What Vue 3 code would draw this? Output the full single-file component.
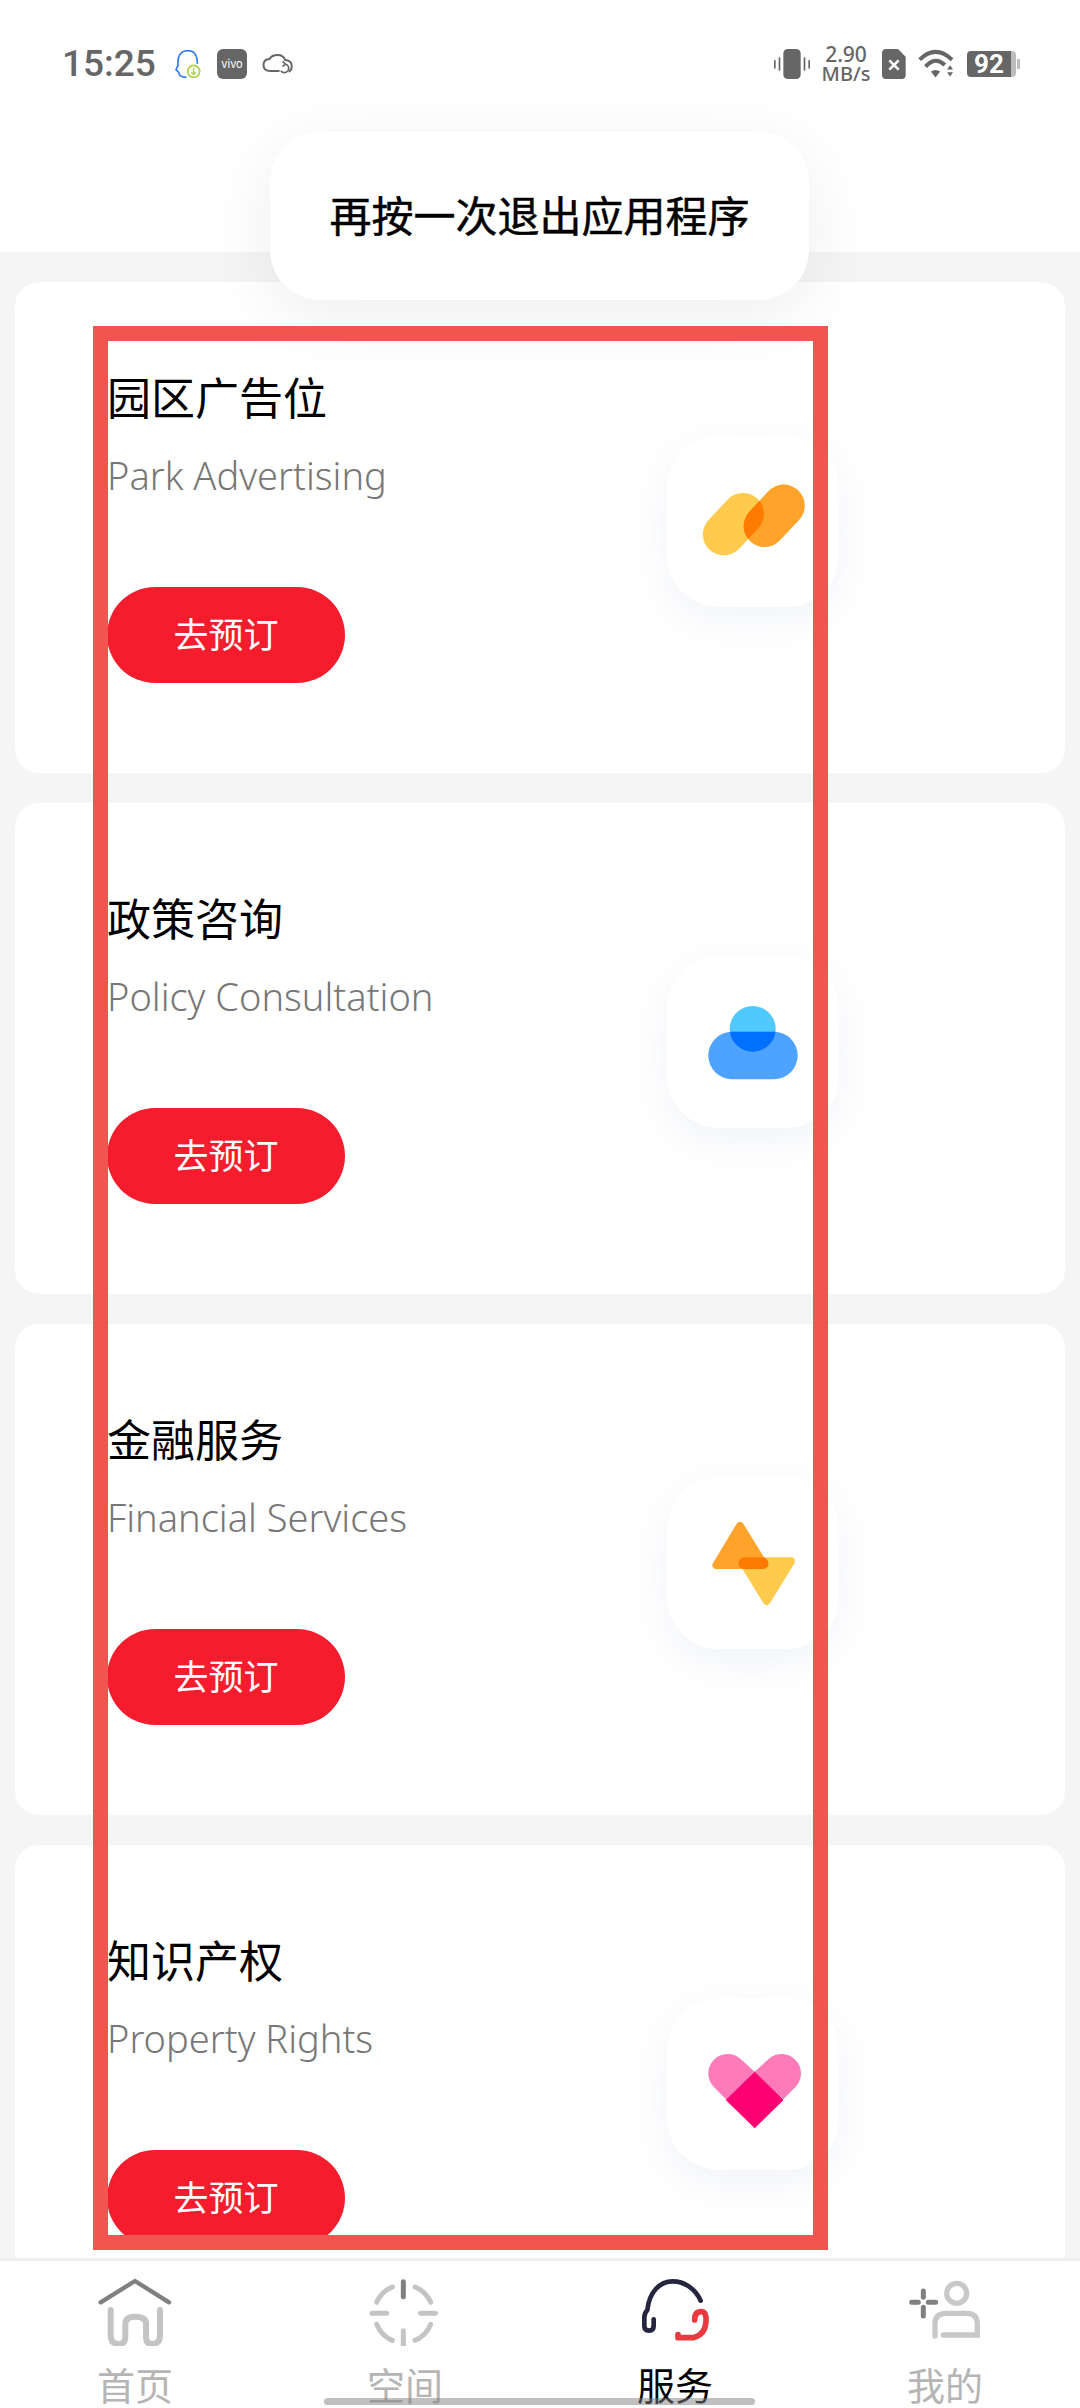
<template>
  <div class="page">
    <header class="status-area">
      <div class="status-left">
        <span class="time">15:25</span>
        <svg class="st-qq" viewBox="403 88 78 84">
          <path d="M436 170Q417 170 414 155L406 147L412 135Q408 90 442 90Q470 90 470 128" fill="none" stroke="#2b7de9" stroke-width="5" stroke-linecap="round" stroke-linejoin="round" />
          <circle cx="459" cy="152" r="18" fill="#fff" stroke="#a8d24a" stroke-width="5" />
          <path d="M459 141V162M452 155L459 162L466 155" fill="none" stroke="#a8d24a" stroke-width="4" />
        </svg>
        <span class="st-vivo">vivo</span>
        <svg class="st-cloud" viewBox="666 100 92 60">
          <path d="M716 151H690Q670 151 670 133Q670 116 688 115Q695 103 712 103Q730 103 735 118Q755 120 755 137Q755 147 748 152" fill="none" stroke="#666" stroke-width="6" stroke-linecap="round" />
          <path d="M722 150A13 13 0 1 0 735 130M727 122L736 130L727 138" fill="none" stroke="#666" stroke-width="5" />
        </svg>
      </div>
      <div class="status-right">
        <svg class="st-vibrate" viewBox="42 57 108 90">
          <rect x="70" y="57" width="52" height="90" rx="13" fill="#666" />
          <rect x="42" y="90" width="5" height="26" rx="2" fill="#666" />
          <rect x="56" y="82" width="5" height="40" rx="2" fill="#666" />
          <rect x="131" y="82" width="5" height="40" rx="2" fill="#666" />
          <rect x="145" y="90" width="5" height="26" rx="2" fill="#666" />
        </svg>
        <div class="st-speed">
          <span>2.90</span>
          <span>MB/s</span>
        </div>
        <svg class="st-sim" viewBox="367 57 72 90">
          <path d="M380 57H415L438 80V135Q438 147 426 147H379Q367 147 367 135V70Q367 57 380 57Z" fill="#666" />
          <path d="M389 91L417 119M417 91L389 119" stroke="#fff" stroke-width="8" />
        </svg>
        <svg class="st-wifi" viewBox="475 60 112 90">
          <path d="M480 92Q528 45 578 92" fill="none" stroke="#666" stroke-width="12" />
          <path d="M498 113Q528 80 556 108" fill="none" stroke="#666" stroke-width="12" />
          <path d="M514 128Q528 118 542 128L528 146Z" fill="#666" />
          <path d="M563 122L572 109L581 122ZM563 130H581L572 143Z" fill="#666" />
        </svg>
        <div class="st-battery">
          <span class="st-level">92</span>
          <span class="st-rest"></span>
          <span class="st-tip"></span>
        </div>
      </div>
    </header>

    <main class="list">
      <section v-for="item in services" :key="item.title" class="card">
        <div class="info">
          <h3 class="title">{{ item.title }}</h3>
          <p class="sub">{{ item.sub }}</p>
          <button class="book">去预订</button>
        </div>
        <div class="icon-box">
          <svg v-if="item.icon === 'pills'" viewBox="0 0 172 172">
            <defs>
              <clipPath id="pill-clip">
                <rect x="-35" y="-21" width="70" height="42" rx="21" transform="translate(66.4 89.2) rotate(-47)" />
              </clipPath>
            </defs>
            <rect x="-35" y="-21" width="70" height="42" rx="21" transform="translate(66.4 89.2) rotate(-47)" fill="#ffcb4f" />
            <rect x="-35" y="-21" width="70" height="42" rx="21" transform="translate(107.2 80.8) rotate(-47)" fill="#ffa32b" />
            <g clip-path="url(#pill-clip)">
              <rect x="-35" y="-21" width="70" height="42" rx="21" transform="translate(107.2 80.8) rotate(-47)" fill="#ff7b00" />
            </g>
          </svg>
          <svg v-else-if="item.icon === 'cloud'" viewBox="0 0 172 172">
            <circle cx="85.7" cy="73" r="23" fill="#4fc9ff" />
            <rect x="41.3" y="75.7" width="89.4" height="47.6" rx="23.8" fill="#4da3ff" />
            <path d="M62.9 75.7A23 23 0 0 0 108.5 75.7Z" fill="#0070ff" />
          </svg>
          <svg v-else-if="item.icon === 'bolt'" viewBox="0 0 172 172">
            <polygon points="75.5,84.3 124,84.3 99.7,124" fill="#ffcb4f" stroke="#ffcb4f" stroke-width="8" stroke-linejoin="round" />
            <polygon points="73,49 49.5,88 97,88" fill="#ffa32b" stroke="#ffa32b" stroke-width="8" stroke-linejoin="round" />
            <rect x="71.5" y="80.3" width="30" height="11.8" rx="6" fill="#ff7b00" />
          </svg>
          <svg v-else viewBox="0 0 172 172">
            <g transform="translate(-27 -27) scale(.3333)">
              <path d="M344 302L303 265A58 58 0 0 0 221 347L344 472L467 347A58 58 0 0 0 385 265Z" fill="#ff7ab8" />
              <polygon points="344,304 429,387 344,470 259,387" fill="#ff0073" stroke="#ff0073" stroke-width="3" stroke-linejoin="round" />
            </g>
          </svg>
        </div>
      </section>
    </main>

    <nav class="tabbar">
      <div class="tab">
        <svg viewBox="60 42 270 216">
          <path d="M92 127L195 63L297 127" fill="none" stroke="#808080" stroke-width="13" stroke-linecap="round" stroke-linejoin="round" />
          <path d="M122 150V225Q122 252 146 252Q166 252 166 230V192Q166 170 195 170Q228 170 228 192V230Q228 252 246 252Q270 252 270 225V150" fill="none" stroke="#c4c4c4" stroke-width="18" stroke-linecap="round" />
        </svg>
        <span>首页</span>
      </div>
      <div class="tab">
        <svg viewBox="870 42 270 216">
          <path d="M1000 65V110" fill="none" stroke="#808080" stroke-width="15" stroke-linecap="round" />
          <path d="M1000 212V256M906 160H950M1052 160H1096M920 127A88 88 0 0 1 967 81M1035 81A88 88 0 0 1 1082 127M1082 193A88 88 0 0 1 1035 241M967 241A88 88 0 0 1 920 193" fill="none" stroke="#c4c4c4" stroke-width="15" stroke-linecap="round" />
        </svg>
        <span>空间</span>
      </div>
      <div class="tab active">
        <svg viewBox="60 42 270 216">
          <path d="M272 122C255 85 222 64 188 64C150 64 118 95 112 150Q103 160 103 172V198Q103 212 117 212Q131 212 131 198V178" fill="none" stroke="#25253f" stroke-width="14" stroke-linecap="round" stroke-linejoin="round" />
          <path d="M254 180Q254 155 274 155Q290 155 288 185Q285 225 250 233H204V224" fill="none" stroke="#e83a3f" stroke-width="17" stroke-linecap="round" stroke-linejoin="round" />
        </svg>
        <span>服务</span>
      </div>
      <div class="tab">
        <svg viewBox="870 42 270 216">
          <circle cx="1040" cy="100" r="30" fill="none" stroke="#c8c8c8" stroke-width="16" />
          <path d="M975 228V190Q975 160 1010 160H1070Q1102 160 1102 192V225H1000" fill="none" stroke="#c8c8c8" stroke-width="16" stroke-linecap="round" />
          <path d="M905 127H925M955 127H977M940 93V112M940 142V168" fill="none" stroke="#808080" stroke-width="15" stroke-linecap="round" />
        </svg>
        <span>我的</span>
      </div>
    </nav>

    <div class="toast">再按一次退出应用程序</div>
    <div class="red-frame"></div>
    <div class="home-bar"></div>
  </div>
</template>

<script setup>
const services = [
  { title: '园区广告位', sub: 'Park Advertising', icon: 'pills' },
  { title: '政策咨询', sub: 'Policy Consultation', icon: 'cloud' },
  { title: '金融服务', sub: 'Financial Services', icon: 'bolt' },
  { title: '知识产权', sub: 'Property Rights', icon: 'heart' },
];
</script>

<style>
html,
body {
  margin: 0;
  background: #fff;
}
</style>

<style scoped>
.page {
  position: relative;
  display: flex;
  flex-direction: column;
  width: 1080px;
  height: 2408px;
  overflow: hidden;
  background: #f5f5f5;
  font-family: "Noto Sans", "Noto Sans CJK SC", sans-serif;
}

/* status bar */
.status-area {
  flex: none;
  box-sizing: border-box;
  height: 252px;
  padding: 47px 60px 0 62px;
  display: flex;
  justify-content: space-between;
  align-items: flex-start;
  background: #fff;
}
.status-left,
.status-right {
  display: flex;
  align-items: center;
  height: 34px;
}
.time {
  width: 93px;
  font-family: Roboto, sans-serif;
  font-size: 37px;
  font-weight: 500;
  line-height: 34px;
  color: #666;
  white-space: nowrap;
}
.st-qq {
  width: 26px;
  height: 28px;
  margin-left: 20px;
}
.st-vivo {
  box-sizing: border-box;
  width: 30px;
  height: 30px;
  margin-left: 16px;
  border-radius: 6px;
  background: #666;
  color: #fff;
  font-family: Inter, sans-serif;
  font-size: 11px;
  line-height: 30px;
  text-align: center;
}
.st-cloud {
  width: 31px;
  height: 20px;
  margin-left: 15px;
}
.status-right {
  gap: 12px;
}
.st-vibrate {
  width: 36px;
  height: 30px;
}
.st-speed {
  display: flex;
  flex-direction: column;
  align-items: center;
  width: 48px;
  color: #666;
  font-family: "Noto Sans", sans-serif;
  font-weight: 500;
  line-height: 20px;
  white-space: nowrap;
}
.st-speed span:first-child {
  font-size: 21px;
}
.st-speed span:last-child {
  font-size: 20px;
}
.st-sim {
  width: 24px;
  height: 30px;
}
.st-wifi {
  width: 37px;
  height: 30px;
}
.st-battery {
  display: flex;
  align-items: center;
  width: 53px;
  height: 26px;
}
.st-level {
  width: 44px;
  height: 26px;
  border-radius: 4px 0 0 4px;
  background: #666;
  color: #fff;
  font-family: Roboto, sans-serif;
  font-size: 26px;
  font-weight: 700;
  line-height: 26px;
  text-align: center;
}
.st-rest {
  width: 5px;
  height: 26px;
  border-radius: 0 4px 4px 0;
  background: #bdbdbd;
}
.st-tip {
  width: 3px;
  height: 10px;
  margin-left: 1px;
  background: #bdbdbd;
}

/* service cards */
.list {
  flex: 1;
  min-height: 0;
  overflow: hidden;
  box-sizing: border-box;
  padding: 30px 15px 0;
  display: flex;
  flex-direction: column;
  gap: 30px;
}
.card {
  flex: none;
  box-sizing: border-box;
  height: 491px;
  padding: 86px 226px 0 92px;
  display: flex;
  justify-content: space-between;
  align-items: flex-start;
  background: #fff;
  border-radius: 24px;
}
.title {
  margin: 0;
  font-size: 44px;
  font-weight: 400;
  line-height: 60px;
  color: #000;
}
.sub {
  margin: 21px 0 0;
  font-size: 38px;
  font-weight: 300;
  line-height: 52px;
  color: #777;
}
.book {
  display: block;
  width: 238px;
  height: 96px;
  margin-top: 86px;
  padding: 0;
  border: none;
  border-radius: 48px;
  background: #f41c2d;
  color: #fff;
  font-family: inherit;
  font-size: 35px;
  line-height: 96px;
}
.icon-box {
  flex: none;
  width: 172px;
  height: 172px;
  margin-top: 67px;
  border-radius: 52px;
  background: #fff;
  box-shadow: 0 12px 40px rgba(120, 140, 180, 0.1);
}
.icon-box svg {
  display: block;
  width: 172px;
  height: 172px;
}

/* bottom tabs */
.tabbar {
  flex: none;
  box-sizing: border-box;
  height: 150px;
  padding-top: 13px;
  border-top: 3px solid #eee;
  display: grid;
  grid-template-columns: repeat(4, 270px);
  background: #fff;
}
.tab {
  display: flex;
  flex-direction: column;
  align-items: center;
  color: #b5b5b5;
  font-size: 38px;
  line-height: 44px;
}
.tab svg {
  width: 90px;
  height: 72px;
  margin-bottom: 17px;
}
.tab.active {
  color: #000;
}

/* overlays */
.toast {
  position: absolute;
  left: 270px;
  top: 132px;
  width: 539px;
  height: 168px;
  border-radius: 50px;
  background: #fff;
  box-shadow: 0 16px 70px rgba(0, 0, 0, 0.07);
  color: #000;
  font-size: 42px;
  font-weight: 400;
  -webkit-text-stroke: 0.5px #000;
  line-height: 168px;
  text-align: center;
}
.red-frame {
  position: absolute;
  left: 93px;
  top: 326px;
  width: 735px;
  height: 1924px;
  box-sizing: border-box;
  border: 15px solid #f25550;
  pointer-events: none;
}
.home-bar {
  position: absolute;
  left: 324px;
  top: 2398px;
  width: 431px;
  height: 7px;
  border-radius: 4px;
  background: rgba(130, 130, 130, 0.5);
}
</style>
